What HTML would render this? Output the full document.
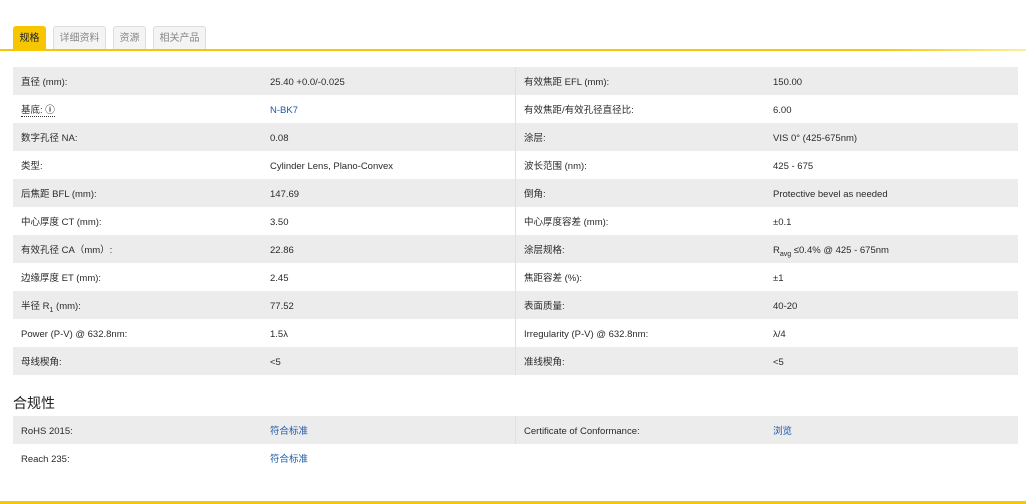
<!DOCTYPE html>
<html><head><meta charset="utf-8"><style>
body{margin:0;width:1026px;height:504px;background:#fff;font-family:"Liberation Sans","Noto Sans CJK SC",sans-serif;position:relative;overflow:hidden;color:#333}
.tab{position:absolute;top:26px;height:24px;box-sizing:border-box;border:1px solid #ddd;border-bottom:none;background:#f4f4f4;color:#888;font-size:10px;line-height:24px;text-align:center;border-radius:3px 3px 0 0}
.tab.a{background:#f7c600;border-color:#f7c600;color:#222}
.line{position:absolute;left:0;top:49px;width:1026px;height:2px;background:linear-gradient(90deg,#f5c800 0,#f5c800 85%,#fbeea0 100%)}
table{position:absolute;left:13px;width:1005px;border-collapse:collapse;font-size:9.5px}
td{height:25px;padding:3px 0 0 8px;color:#2a2a2a;line-height:12px;vertical-align:middle}
tr:nth-child(odd) td{background:#ececec}
td.l{width:241px}td.v{width:245px;border-right:1px solid #e0e0e0}td.l2{width:241px}
a{color:#1a5aa8;text-decoration:none}
h3{position:absolute;left:13px;top:394px;margin:0;font-size:14px;font-weight:normal;color:#222;line-height:18px}
.bot{position:absolute;left:0;top:501px;width:1026px;height:3px;background:#f5c800}
sub{font-size:7px;line-height:0}
</style></head><body>
<div class="tab a" style="left:13px;width:33px">规格</div>
<div class="tab" style="left:53px;width:53px">详细资料</div>
<div class="tab" style="left:113px;width:33px">资源</div>
<div class="tab" style="left:153px;width:53px">相关产品</div>
<div class="line"></div>
<table style="top:67px">
<tr><td class="l">直径 (mm):</td><td class="v">25.40 +0.0/-0.025</td><td class="l2">有效焦距 EFL (mm):</td><td>150.00</td></tr>
<tr><td class="l"><span style="border-bottom:1px dotted #333">基底: <b>ⓘ</b></span></td><td class="v"><a>N-BK7</a></td><td class="l2">有效焦距/有效孔径直径比:</td><td>6.00</td></tr>
<tr><td class="l">数字孔径 NA:</td><td class="v">0.08</td><td class="l2">涂层:</td><td>VIS 0° (425-675nm)</td></tr>
<tr><td class="l">类型:</td><td class="v">Cylinder Lens, Plano-Convex</td><td class="l2">波长范围 (nm):</td><td>425 - 675</td></tr>
<tr><td class="l">后焦距 BFL (mm):</td><td class="v">147.69</td><td class="l2">倒角:</td><td>Protective bevel as needed</td></tr>
<tr><td class="l">中心厚度 CT (mm):</td><td class="v">3.50</td><td class="l2">中心厚度容差 (mm):</td><td>±0.1</td></tr>
<tr><td class="l">有效孔径 CA（mm）:</td><td class="v">22.86</td><td class="l2">涂层规格:</td><td>R<sub>avg</sub> ≤0.4% @ 425 - 675nm</td></tr>
<tr><td class="l">边缘厚度 ET (mm):</td><td class="v">2.45</td><td class="l2">焦距容差 (%):</td><td>±1</td></tr>
<tr><td class="l">半径 R<sub>1</sub> (mm):</td><td class="v">77.52</td><td class="l2">表面质量:</td><td>40-20</td></tr>
<tr><td class="l">Power (P-V) @ 632.8nm:</td><td class="v">1.5λ</td><td class="l2">Irregularity (P-V) @ 632.8nm:</td><td>λ/4</td></tr>
<tr><td class="l">母线楔角:</td><td class="v">&lt;5</td><td class="l2">准线楔角:</td><td>&lt;5</td></tr>
</table>
<h3>合规性</h3>
<table style="top:416px">
<tr><td class="l">RoHS 2015:</td><td class="v"><a>符合标准</a></td><td class="l2">Certificate of Conformance:</td><td><a>浏览</a></td></tr>
<tr><td class="l">Reach 235:</td><td class="v" style="border:none"><a>符合标准</a></td><td class="l2"></td><td></td></tr>
</table>
<div class="bot"></div>
</body></html>
